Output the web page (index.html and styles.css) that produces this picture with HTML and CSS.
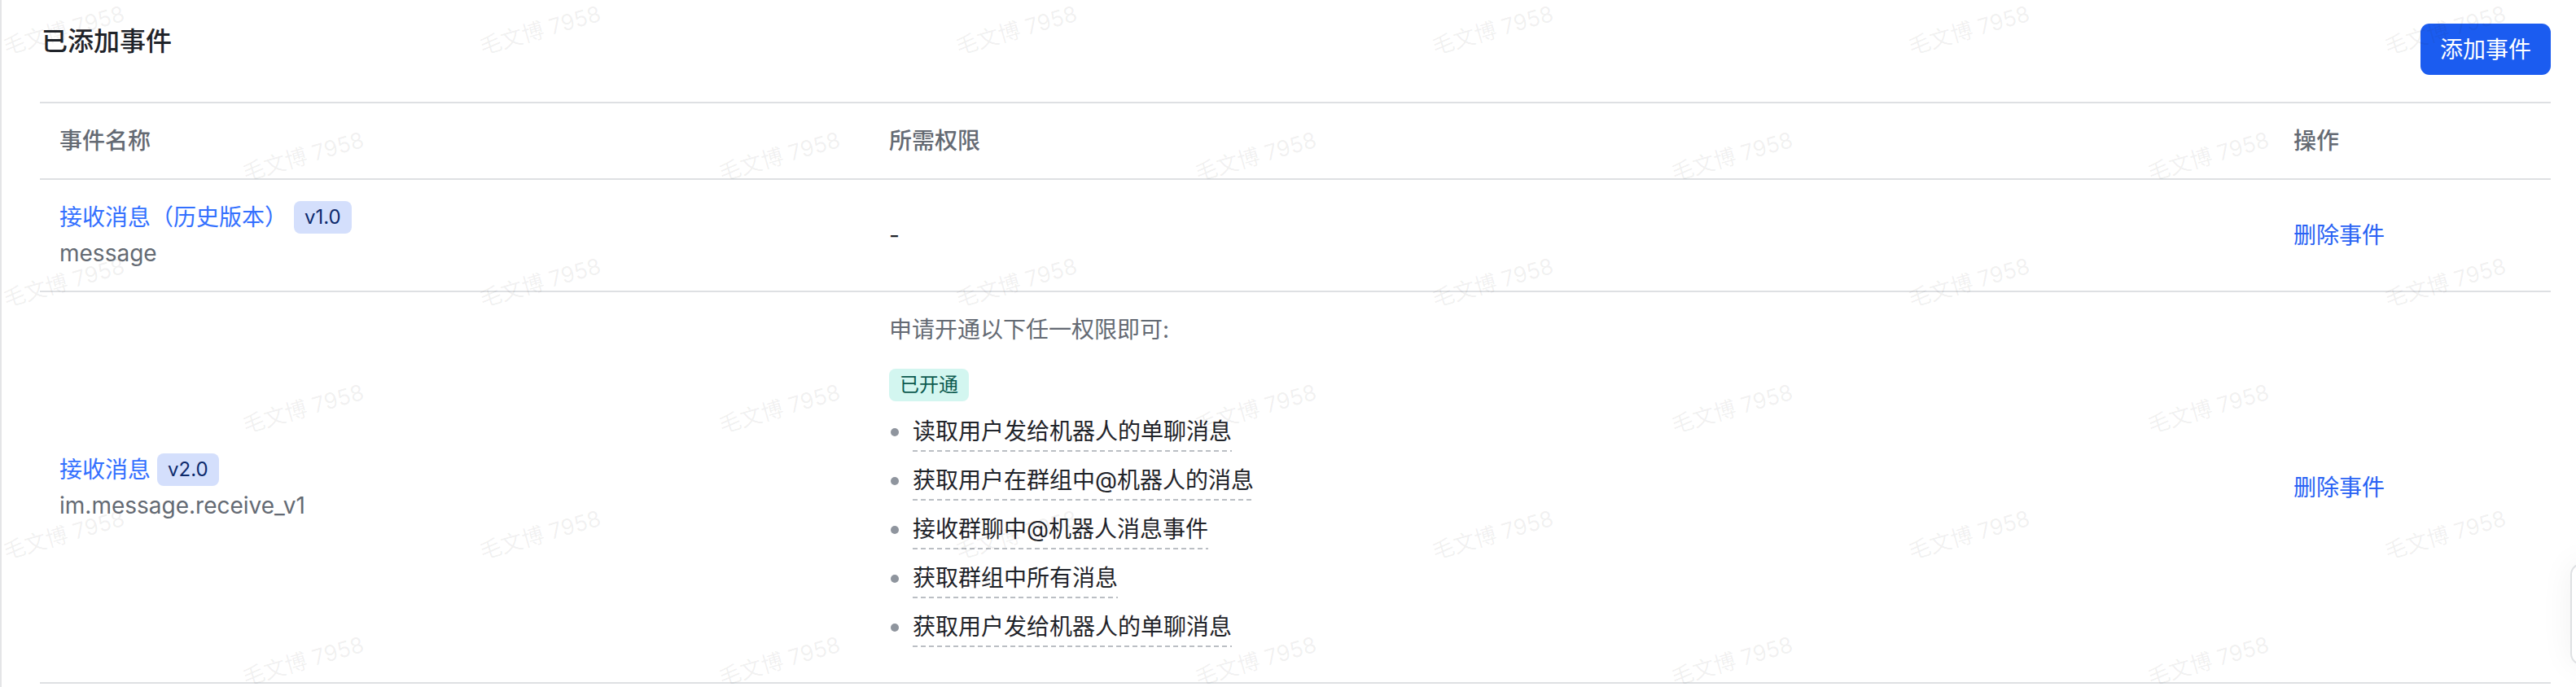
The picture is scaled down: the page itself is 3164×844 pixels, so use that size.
FILE: index.html
```html
<!DOCTYPE html>
<html lang="zh-CN">
<head>
<meta charset="utf-8">
<title>已添加事件</title>
<link rel="stylesheet" href="styles.css">
</head>
<body>
<div class="page">
  <div class="head">
    <h2 class="title">已添加事件</h2>
    <button class="btn">添加事件</button>
  </div>

  <div class="table">
    <div class="tr th">
      <div class="cell">事件名称</div>
      <div class="cell">所需权限</div>
      <div class="cell">操作</div>
    </div>

    <div class="tr">
      <div class="cell">
        <div class="name-line"><span class="name">接收消息（历史版本）</span><span class="badge">v1.0</span></div>
        <div class="key">message</div>
      </div>
      <div class="cell"><span class="dash">-</span></div>
      <div class="cell"><a class="link">删除事件</a></div>
    </div>

    <div class="tr">
      <div class="cell">
        <div class="name-line"><span class="name">接收消息</span><span class="badge">v2.0</span></div>
        <div class="key">im.message.receive_v1</div>
      </div>
      <div class="cell perm">
        <div class="intro">申请开通以下任一权限即可:</div>
        <span class="tag">已开通</span>
        <ul class="plist">
          <li><span class="ul">读取用户发给机器人的单聊消息</span></li>
          <li><span class="ul">获取用户在群组中@机器人的消息</span></li>
          <li><span class="ul">接收群聊中@机器人消息事件</span></li>
          <li><span class="ul">获取群组中所有消息</span></li>
          <li><span class="ul">获取用户发给机器人的单聊消息</span></li>
        </ul>
      </div>
      <div class="cell"><a class="link">删除事件</a></div>
    </div>
  </div>

  <div class="wm">
    <div class="wm-row"><span>毛文博 7958</span><span>毛文博 7958</span><span>毛文博 7958</span><span>毛文博 7958</span><span>毛文博 7958</span><span>毛文博 7958</span></div>
    <div class="wm-row odd"><span>毛文博 7958</span><span>毛文博 7958</span><span>毛文博 7958</span><span>毛文博 7958</span><span>毛文博 7958</span></div>
    <div class="wm-row"><span>毛文博 7958</span><span>毛文博 7958</span><span>毛文博 7958</span><span>毛文博 7958</span><span>毛文博 7958</span><span>毛文博 7958</span></div>
    <div class="wm-row odd"><span>毛文博 7958</span><span>毛文博 7958</span><span>毛文博 7958</span><span>毛文博 7958</span><span>毛文博 7958</span></div>
    <div class="wm-row"><span>毛文博 7958</span><span>毛文博 7958</span><span>毛文博 7958</span><span>毛文博 7958</span><span>毛文博 7958</span><span>毛文博 7958</span></div>
    <div class="wm-row odd"><span>毛文博 7958</span><span>毛文博 7958</span><span>毛文博 7958</span><span>毛文博 7958</span><span>毛文博 7958</span></div>
  </div>

  <div class="float-edge"></div>
</div>
</body>
</html>
```

FILE: styles.css
```css
html, body {
  margin: 0;
  padding: 0;
  background: #ffffff;
}

body {
  font-family: Inter, "Noto Sans CJK SC", sans-serif;
  font-size: 28px;
  color: #1f2329;
}

.page {
  position: relative;
  box-sizing: border-box;
  width: 3164px;
  height: 844px;
  overflow: hidden;
  border-left: 2px solid #e4e5e7;
  padding: 29px 31px 0 47px;
}

.head {
  display: flex;
  justify-content: space-between;
  align-items: flex-start;
  height: 63px;
  margin-bottom: 33px;
}

.title {
  margin: 0 0 0 2px;
  font-size: 32px;
  line-height: 44px;
  font-weight: 500;
  color: #1f2329;
}

.btn {
  height: 63px;
  width: 160px;
  border: none;
  border-radius: 11px;
  background: #1b5cf0;
  color: #ffffff;
  font-family: Inter, "Noto Sans CJK SC", sans-serif;
  font-size: 28px;
  line-height: 40px;
  padding: 0;
}

.table {
  border-top: 2px solid #dee0e3;
}

.tr {
  display: grid;
  grid-template-columns: 1019px 1725px 1fr;
  align-items: center;
  border-bottom: 2px solid #dee0e3;
}

.cell {
  padding: 24px;
  line-height: 44px;
}

.th .cell {
  color: #646a73;
  font-weight: 500;
}

.name-line {
  display: flex;
  align-items: center;
  height: 44px;
}

.name {
  color: #3370ff;
}

.badge {
  margin-left: 8px;
  height: 40px;
  line-height: 40px;
  padding: 0 13px;
  border-radius: 8px;
  background: #d4dffc;
  color: #0d2a6c;
  font-size: 24px;
}

.key {
  color: #646a73;
}

.dash {
  color: #1f2329;
}

.link {
  color: #2a63f4;
  cursor: pointer;
}

.perm {
  align-self: start;
}

.intro {
  color: #646a73;
}

.tag {
  display: inline-block;
  margin-top: 26px;
  height: 40px;
  line-height: 40px;
  padding: 0 13px;
  border-radius: 8px;
  background: #d3f6f0;
  color: #0d5a4f;
  font-size: 24px;
  vertical-align: top;
}

.plist {
  list-style: none;
  margin: 0 0 21px;
  padding: 0;
}

.plist li {
  display: flex;
  align-items: center;
  margin-top: 16px;
  height: 44px;
}

.plist li::before {
  content: "";
  width: 10px;
  height: 10px;
  border-radius: 50%;
  background: #8f959e;
  margin: 0 17px 0 2px;
  flex: none;
}

.ul {
  padding-bottom: 3px;
  background: repeating-linear-gradient(to right, #bbbfc4 0 6px, transparent 6px 10px) left bottom / 100% 2px no-repeat;
}

/* watermark overlay */
.wm {
  position: absolute;
  top: 0;
  left: 0;
  width: 100%;
  height: 100%;
  pointer-events: none;
}

.wm-row {
  display: flex;
  height: 155px;
  padding-top: 22px;
  box-sizing: border-box;
}

.wm-row.odd {
  padding-left: 294px;
}

.wm-row span {
  display: block;
  flex: none;
  width: 585px;
  font-size: 27px;
  line-height: 32px;
  color: rgba(31, 35, 41, 0.07);
  white-space: nowrap;
  transform-origin: 75px 16px;
  transform: rotate(-16deg);
}

.float-edge {
  position: absolute;
  left: 3155px;
  top: 692px;
  width: 40px;
  height: 121px;
  border: 2px solid #dee0e3;
  border-radius: 14px;
  background: #ffffff;
  box-shadow: 0 0 40px rgba(31, 35, 41, 0.06);
}
```
